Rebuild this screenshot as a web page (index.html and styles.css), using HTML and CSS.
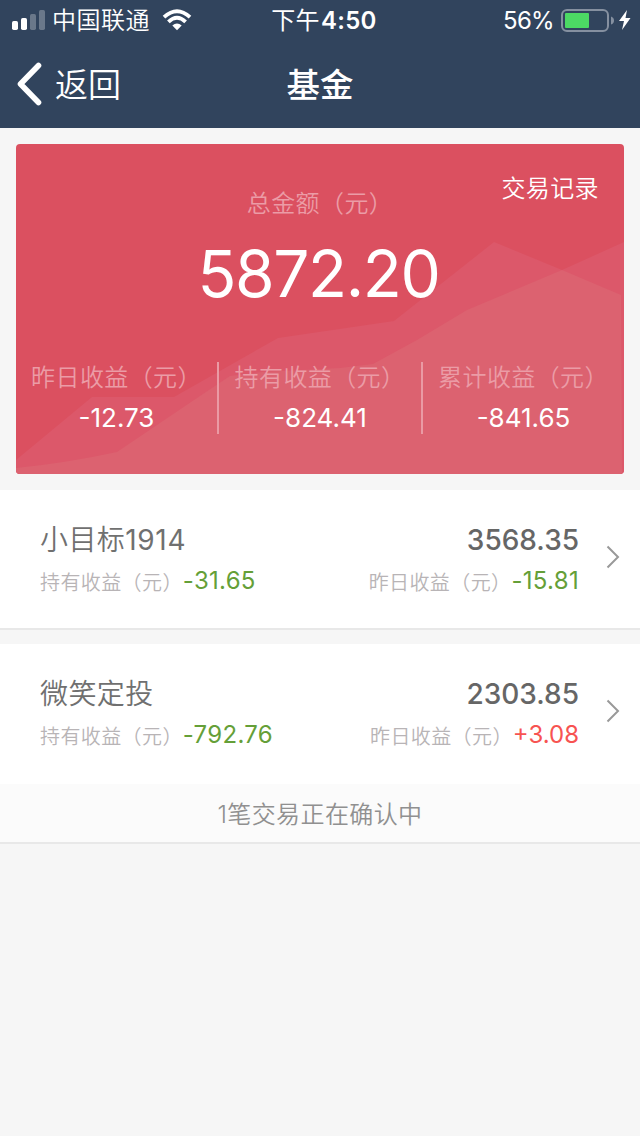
FILE: index.html
```html
<!DOCTYPE html>
<html lang="zh-CN">
<head>
<meta charset="utf-8">
<title>基金</title>
<link rel="stylesheet" href="styles.css">
</head>
<body>
<header class="header">
  <div class="status">
    <div class="status-left">
      <svg class="signal" width="34" height="22" viewBox="0 0 34 22"><g fill="#fff"><rect x="0" y="12" width="6" height="9" rx="1.7"/><rect x="9" y="9" width="6" height="12" rx="1.7"/><g opacity=".28"><rect x="18" y="5" width="6" height="16" rx="1.7"/><rect x="27" y="1" width="6" height="20" rx="1.7"/></g></g></svg>
      <span class="carrier">中国联通</span>
      <svg class="wifi" width="30" height="22" viewBox="0 0 30 22"><g fill="none" stroke="#fff" stroke-width="3.8"><path d="M2 8.2Q15-3.8 28 8.2"/><path d="M6.4 12.8Q15 4.6 23.6 12.8"/></g><path d="M10.3 16.4Q15 12.4 19.7 16.4L15 21.2Z" fill="#fff"/></svg>
    </div>
    <div class="time"><span class="period">下午</span><span class="clock">4:50</span></div>
    <div class="status-right">
      <span class="percent">56%</span>
      <svg class="battery" width="54" height="24" viewBox="0 0 54 24"><rect x="1" y="1" width="46" height="21" rx="5" fill="none" stroke="#8590a0" stroke-width="2"/><rect x="4" y="4" width="24" height="15" rx="1" fill="#4cd964"/><path d="M50 7.5q3 1 3 4t-3 4z" fill="#8590a0"/></svg>
      <svg class="bolt" width="12" height="20" viewBox="0 0 12 20"><path d="M8 0L0 11H5L3 20L11.500 8H6.500Z" fill="#fff"/></svg>
    </div>
  </div>
  <nav class="nav">
    <a class="back"><svg width="26" height="44" viewBox="0 0 26 44"><path d="M22.500 3.500L4.500 22L22.500 40.500" fill="none" stroke="#fff" stroke-width="5.600" stroke-linecap="round" stroke-linejoin="round"/></svg><span>返回</span></a>
    <h1 class="title">基金</h1>
    <div></div>
  </nav>
</header>
<main>
  <section class="card">
    <svg class="waves" width="608" height="330" viewBox="0 0 608 330"><path d="M0 316L76 253H158L262 194L378 177L478 98L546 126L608 98V330H0Z" fill="#dc586a"/><path d="M0 324Q50 319 101 308L184 252L214 232L246 228L324 224L357 220L401 196L451 166L546 126L605 151L606 330H0Z" fill="#dc6270"/></svg>
    <a class="records">交易记录</a>
    <div class="total-label">总金额（元）</div>
    <div class="total">5872.20</div>
    <div class="stats">
      <div class="stat"><span class="stat-label">昨日收益（元）</span><span class="stat-value">-12.73</span></div>
      <div class="stat"><span class="stat-label">持有收益（元）</span><span class="stat-value">-824.41</span></div>
      <div class="stat"><span class="stat-label">累计收益（元）</span><span class="stat-value">-841.65</span></div>
    </div>
  </section>
  <section class="fund first">
    <div class="rows">
      <div class="row top"><span class="name">小目标<span class="digits">1914</span></span><span class="amount">3568.35</span></div>
      <div class="row"><div class="pair"><span class="label">持有收益（元）</span><span class="value">-31.65</span></div><div class="pair"><span class="label">昨日收益（元）</span><span class="value">-15.81</span></div></div>
    </div>
    <svg class="chevron" width="14" height="24" viewBox="0 0 14 24"><path d="M1.500 1.500L12 12L1.500 22.500" fill="none" stroke="#999" stroke-width="2"/></svg>
  </section>
  <section class="fund">
    <div class="rows">
      <div class="row top"><span class="name">微笑定投</span><span class="amount">2303.85</span></div>
      <div class="row"><div class="pair"><span class="label">持有收益（元）</span><span class="value">-792.76</span></div><div class="pair"><span class="label">昨日收益（元）</span><span class="value up">+3.08</span></div></div>
    </div>
    <svg class="chevron" width="14" height="24" viewBox="0 0 14 24"><path d="M1.500 1.500L12 12L1.500 22.500" fill="none" stroke="#999" stroke-width="2"/></svg>
  </section>
  <div class="pending">1笔交易正在确认中</div>
</main>
</body>
</html>
```
FILE: styles.css
```css
* { box-sizing: border-box; }
body {
  margin: 0;
  min-height: 1136px;
  background: #f6f6f6;
  font-family: Inter, "Noto Sans CJK SC", sans-serif;
}
svg { display: block; flex: none; }
.header { height: 128px; background: #31445d; color: #fff; }
.status {
  height: 40px;
  display: grid;
  grid-template-columns: 1fr auto 1fr;
  padding: 0 9px 0 12px;
  font-size: 24px;
  line-height: 40px;
  white-space: nowrap;
}
.status-left, .status-right { height: 40px; display: flex; align-items: center; }
.status-right { justify-content: flex-end; }
.carrier { padding-top: 2px; margin-left: 6px; letter-spacing: .5px; font-weight: 350; }
.wifi { margin-left: 12px; }
.time { padding: 1px 0 0 5px; }
.period { letter-spacing: .3px; }
.clock { font-weight: 600; letter-spacing: .3px; margin-left: 1px; }
.percent { padding-top: 2px; letter-spacing: -.7px; }
.battery { margin: 1px 0 0 7px; }
.bolt { margin-left: 4px; }
.nav {
  height: 88px;
  display: grid;
  grid-template-columns: 1fr auto 1fr;
  align-items: center;
  padding: 0 16px;
}
.back { display: flex; align-items: center; font-size: 33px; line-height: 48px; font-weight: 350; }
.back span { margin-left: 13px; padding-top: 2px; }
.title { margin: 0; padding-top: 2px; font-size: 33.500px; line-height: 48px; font-weight: 500; }
.card {
  position: relative;
  height: 330px;
  margin: 16px;
  border-radius: 4px;
  overflow: hidden;
  background: #db5060;
  color: #fff;
  text-align: center;
  padding-top: 40px;
}
.waves { position: absolute; left: 0; top: 0; }
.records {
  position: absolute;
  right: 25px;
  top: 25px;
  font-size: 24px;
  line-height: 36px;
  letter-spacing: .4px;
  font-weight: 350;
  font-family: "Noto Sans CJK SC", sans-serif;
}
.total-label, .stat-label {
  position: relative;
  font-size: 24px;
  line-height: 36px;
  letter-spacing: .4px;
  font-weight: 350;
  color: #eb9ca6;
  font-family: "Noto Sans CJK SC", sans-serif;
}
.total {
  position: relative;
  margin-top: 14px;
  padding-right: 3px;
  font-size: 64px;
  line-height: 80px;
  letter-spacing: -1.400px;
}
.stats { position: relative; display: grid; grid-template-columns: 201px 204px 203px; margin-top: 48px; }
.stat { height: 72px; display: flex; flex-direction: column; }
.stat + .stat { border-left: 2px solid #ea9aa4; }
.stat-label { margin-top: -4px; white-space: nowrap; }
.stat-value { margin-top: 6px; font-size: 26px; line-height: 36px; }
.fund {
  height: 140px;
  display: flex;
  padding: 30px 20px 0 40px;
  background: #fff;
}
.fund.first { border-bottom: 2px solid #e8e8e8; margin-bottom: 14px; }
.rows { width: 540px; }
.row { display: flex; justify-content: space-between; height: 41px; line-height: 41px; }
.pair { display: flex; }
.name { font-size: 28px; letter-spacing: .4px; font-weight: 350; color: #707070; }
.digits { letter-spacing: .7px; font-weight: 400; }
.amount { font-size: 28px; font-weight: 500; color: #666; line-height: 40px; margin-right: -1px; }
.label {
  font-size: 20px;
  letter-spacing: .4px;
  font-weight: 350;
  color: #b8b4b6;
  line-height: 41px;
  font-family: "Noto Sans CJK SC", sans-serif;
}
.value { font-size: 24px; line-height: 40px; letter-spacing: .3px; margin-right: -1px; color: #659f38; }
.value.up { color: #f75351; letter-spacing: 0; }
.chevron { margin-left: 28px; margin-top: 25px; }
.pending {
  height: 60px;
  padding-top: 1px;
  background: #fbfbfb;
  border-bottom: 2px solid #e8e8e8;
  text-align: center;
  font-size: 24px;
  letter-spacing: .4px;
  line-height: 60px;
  font-weight: 350;
  color: #909090;
}
```
